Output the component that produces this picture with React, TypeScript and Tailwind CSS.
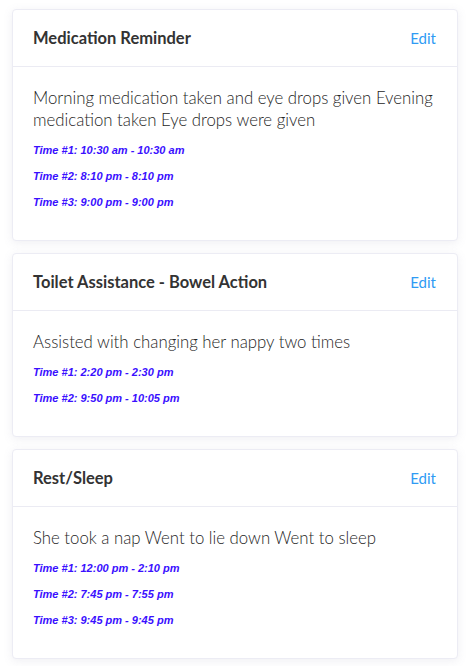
import React from "react";

type Card = { title: string; text: string; times: string[] };

const cards: Card[] = [
  {
    title: "Medication Reminder",
    text: "Morning medication taken and eye drops given Evening medication taken Eye drops were given",
    times: ["Time #1: 10:30 am - 10:30 am", "Time #2: 8:10 pm - 8:10 pm", "Time #3: 9:00 pm - 9:00 pm"],
  },
  {
    title: "Toilet Assistance - Bowel Action",
    text: "Assisted with changing her nappy two times",
    times: ["Time #1: 2:20 pm - 2:30 pm", "Time #2: 9:50 pm - 10:05 pm"],
  },
  {
    title: "Rest/Sleep",
    text: "She took a nap Went to lie down Went to sleep",
    times: ["Time #1: 12:00 pm - 2:10 pm", "Time #2: 7:45 pm - 7:55 pm", "Time #3: 9:45 pm - 9:45 pm"],
  },
];

export default function App() {
  return (
    <div className="min-h-[666px] bg-white pl-3 pr-2 pt-[9px] pb-2 flex flex-col gap-3 font-['Lato',sans-serif]">
      {cards.map((c) => (
        <div
          key={c.title}
          className="bg-white rounded-[4px] border border-[#ececf4] shadow-[0_2px_10px_rgba(120,120,160,0.12)]"
        >
          <div className="h-[57px] flex items-center justify-between pl-5 pr-[21px] border-b border-[#ebebf3]">
            <span className="text-[16.5px] font-bold text-[#333333]">{c.title}</span>
            <span className="text-[15px] text-[#2f9bf4]">Edit</span>
          </div>
          <div className="pl-5 pr-3 pt-5 pb-[25px]">
            <p className="text-[16.8px] leading-[22px] text-[#262626] font-light mb-[6px]">{c.text}</p>
            {c.times.map((t) => (
              <div
                key={t}
                className="text-[11px] leading-[26px] font-bold italic text-[#3a10ff] font-['Liberation_Sans',Arial,sans-serif]"
              >
                {t}
              </div>
            ))}
          </div>
        </div>
      ))}
    </div>
  );
}
